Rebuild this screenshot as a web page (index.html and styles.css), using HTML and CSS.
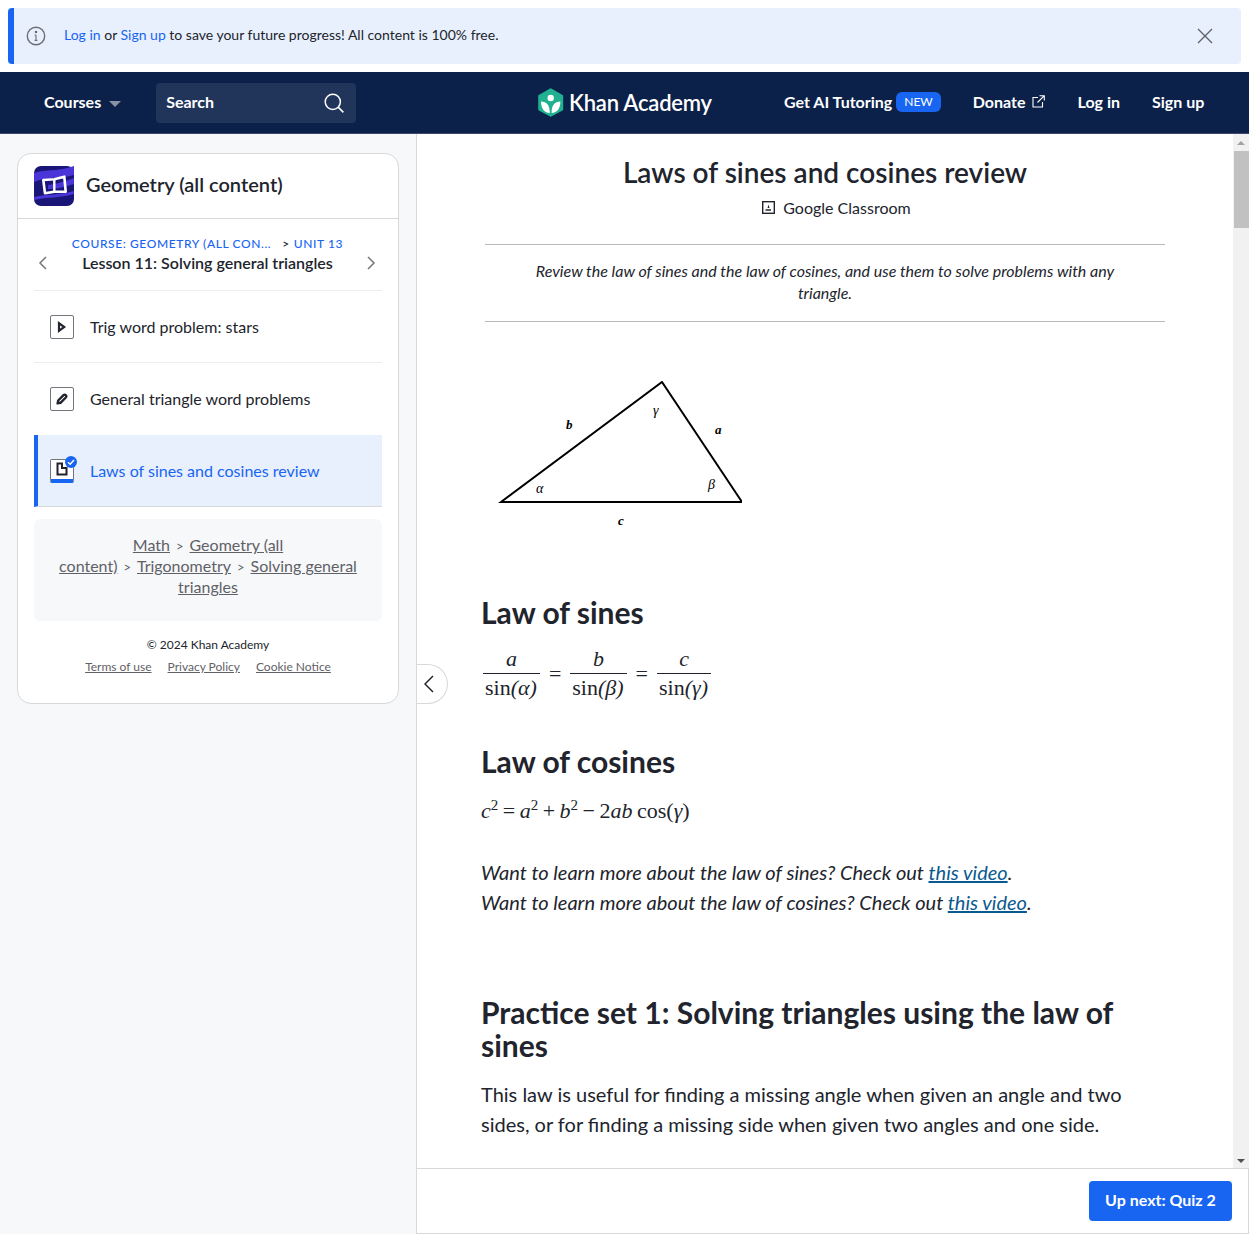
FILE: index.html
```html
<!DOCTYPE html>
<html lang="en">
<head>
	<meta charset="utf-8">
	<title>Laws of sines and cosines review</title>
	<link rel="stylesheet" href="styles.css">
</head>
<body>
	<div class="notice">
		<svg class="notice-icon" width="20" height="20" viewBox="0 0 20 20" fill="none" stroke="#6b6d72" stroke-width="1.4"><circle cx="10" cy="10" r="8.7"/><path d="M10 9v5.400M8.600 9H10M8.600 14.400h2.800" stroke-width="1.100"/><circle cx="10" cy="6" r=".6" fill="#6b6d72"/></svg>
		<p class="notice-text"><a href="#">Log in</a> or <a href="#">Sign up</a> to save your future progress! All content is 100% free.</p>
		<svg class="notice-close" width="16" height="16" viewBox="0 0 16 16" stroke="#5f6167" stroke-width="1.4"><path d="M1 1l14 14M15 1L1 15"/></svg>
	</div>

	<header class="nav">
		<div class="nav-left">
			<a class="nav-link" href="#">Courses</a>
			<span class="caret"></span>
			<div class="search">
				<span>Search</span>
				<svg width="22" height="22" viewBox="0 0 22 22" fill="none" stroke="#fff" stroke-width="1.5"><circle cx="9.800" cy="9.800" r="7.600"/><path d="M15.400 15.400l5 5"/></svg>
			</div>
		</div>
		<a class="logo" href="#">
			<svg width="27" height="29" viewBox="0 0 27 29"><path d="M13.700 1.500L25 8v13.500L13.700 27.500 2.400 21.500V8z" fill="#1fb190" stroke="#1fb190" stroke-width="2.400" stroke-linejoin="round"/><circle cx="13.700" cy="10" r="3.200" fill="#fff"/><path d="M4 13.500c5.500 0 8.800 3.500 8.800 11.500C7 25 4 20 4 13.500zM23.400 13.500c-5.500 0-8.800 3.500-8.800 11.500 5.800 0 8.800-5 8.800-11.500z" fill="#fff"/></svg>
			<span>Khan Academy</span>
		</a>
		<div class="nav-right">
			<a class="nav-link ai" href="#"><span>Get AI Tutoring</span> <span class="badge">NEW</span></a>
			<a class="nav-link donate" href="#"><span>Donate</span>
				<svg width="13" height="13" viewBox="0 0 13 13" fill="none" stroke="#fff" stroke-width="1.100"><path d="M6 2.500H1v9.500h9.500V7M7.500.700h4.800v4.800M12.300.700L5.500 7.500"/></svg>
			</a>
			<a class="nav-link" href="#">Log in</a>
			<a class="nav-link" href="#">Sign up</a>
		</div>
	</header>

	<div class="page">
		<aside class="sidebar">
			<div class="card">
				<div class="card-head">
					<svg class="course-icon" width="40" height="40" viewBox="0 0 40 40">
						<rect width="40" height="40" rx="7" fill="#1a1678"/>
						<path d="M0 7C12 3 24 6 40 0v9C26 13 14 10 0 16zM14 19c9-1 18-4 26-7v6c-9 3-18 5-26 5zM0 31c14-3 26-2 40-6v3c-14 4-26 3-40 6z" fill="#4a36d8"/>
						<path d="M9.300 14L20.300 13.300 30.300 10.700 31.700 25.700 20.300 25.700 11 27.300z" fill="none" stroke="#fff" stroke-width="2.600" stroke-linejoin="round"/>
						<path d="M20.300 13.300v12.400" stroke="#fff" stroke-width="2.400"/>
					</svg>
					<h2 class="course-title">Geometry (all content)</h2>
				</div>
				<div class="card-body">
					<div class="lesson-nav">
						<svg width="10" height="14" viewBox="0 0 10 14" fill="none" stroke="#75777c" stroke-width="1.500"><path d="M8 1L2 7l6 6"/></svg>
						<div class="lesson-info">
							<div class="crumbs"><span class="crumb-course">COURSE: GEOMETRY (ALL CON...</span><span class="crumb-sep">&gt;</span><span>UNIT 13</span></div>
							<div class="lesson-title">Lesson 11: Solving general triangles</div>
						</div>
						<svg width="10" height="14" viewBox="0 0 10 14" fill="none" stroke="#75777c" stroke-width="1.500"><path d="M2 1l6 6-6 6"/></svg>
					</div>
					<a class="item" href="#">
						<span class="item-icon"><svg width="10" height="12" viewBox="0 0 10 12" fill="none" stroke="#21242c" stroke-width="2.200"><path d="M2 2.200v7.600l5.200-3.800z"/></svg></span>
						Trig word problem: stars
					</a>
					<a class="item item-plain" href="#">
						<span class="item-icon"><svg width="12" height="12" viewBox="0 0 12 12" fill="none" stroke="#21242c" stroke-width="2.400" stroke-linejoin="round"><path d="M1.600 10.400L2.200 7.500 7.500 2.200a1.700 1.700 0 0 1 2.300 0a1.700 1.700 0 0 1 0 2.300L4.500 9.800z"/></svg></span>
						General triangle word problems
					</a>
					<a class="item item-active" href="#">
						<span class="item-icon item-icon-active">
							<svg width="12" height="14" viewBox="0 0 12 14" fill="none" stroke="#21242c" stroke-width="2"><path d="M1.500 1.500h4.500v4.500h4.500v6.500h-9z"/></svg>
							<svg class="check" width="12" height="12" viewBox="0 0 12 12"><circle cx="6" cy="6" r="6" fill="#1865f2"/><path d="M3 6.200l2.200 2L9 4" fill="none" stroke="#fff" stroke-width="1.500"/></svg>
						</span>
						Laws of sines and cosines review
					</a>
					<nav class="path">
						<a href="#">Math</a><span class="sep">&gt;</span><a href="#">Geometry (all content)</a><span class="sep">&gt;</span><a href="#">Trigonometry</a><span class="sep">&gt;</span><a href="#">Solving general triangles</a>
					</nav>
					<div class="legal">
						<div>© 2024 Khan Academy</div>
						<div class="legal-links"><a href="#">Terms of use</a><a href="#">Privacy Policy</a><a href="#">Cookie Notice</a></div>
					</div>
				</div>
			</div>
		</aside>

		<main class="content">
			<button class="collapse"><svg width="10" height="18" viewBox="0 0 10 18" fill="none" stroke="#21242c" stroke-width="1.500"><path d="M9 1L1 9l8 8"/></svg></button>
			<div class="scroller">
				<article class="article">
					<header class="article-head">
						<h1>Laws of sines and cosines review</h1>
						<div class="classroom">
							<svg width="13" height="13" viewBox="0 0 13 13" fill="none"><rect x=".7" y=".7" width="11.600" height="11.600" stroke="#21242c" stroke-width="1.400"/><path d="M6.500 3.500l1 3.500h-2z" fill="#21242c"/><path d="M3.500 9h5.500" stroke="#21242c" stroke-width="1.500"/></svg>
							Google Classroom
						</div>
					</header>
					<p class="summary">Review the law of sines and the law of cosines, and use them to solve problems with any triangle.</p>
					<div class="body">
						<svg class="triangle" width="260" height="160" viewBox="0 0 260 160">
							<path d="M19 121L180 1l80 120z" fill="none" stroke="#000" stroke-width="2"/>
							<g font-family="'Liberation Serif', serif" font-style="italic" font-size="13" font-weight="bold">
								<text x="84" y="48">b</text>
								<text x="233" y="53">a</text>
								<text x="136" y="144">c</text>
							</g>
							<g font-family="'Liberation Serif', serif" font-style="italic" font-size="14">
								<text x="54" y="112">α</text>
								<text x="171" y="34">γ</text>
								<text x="226" y="108">β</text>
							</g>
						</svg>

						<h2 class="sines">Law of sines</h2>
						<div class="math math-fracs">
							<span class="frac"><span class="num">a</span><span class="den"><b>sin</b>(α)</span></span>
							<span class="eq">=</span>
							<span class="frac"><span class="num">b</span><span class="den"><b>sin</b>(β)</span></span>
							<span class="eq">=</span>
							<span class="frac"><span class="num">c</span><span class="den"><b>sin</b>(γ)</span></span>
						</div>

						<h2 class="cosines">Law of cosines</h2>
						<div class="math math-line">c<sup>2</sup> <span class="eq">=</span> a<sup>2</sup> <span class="eq">+</span> b<sup>2</sup> <span class="eq">−</span> <span class="up">2</span>ab <span class="up">cos(</span>γ<span class="up">)</span></div>

						<p class="more">Want to learn more about the law of sines? Check out <a href="#">this video</a>.<br>Want to learn more about the law of cosines? Check out <a href="#">this video</a>.</p>

						<h2 class="practice">Practice set 1: Solving triangles using the law of sines</h2>
						<p class="para">This law is useful for finding a missing angle when given an angle and two sides, or for finding a missing side when given two angles and one side.</p>
					</div>
				</article>
				<div class="scrollbar">
					<span class="arrow arrow-up"></span>
					<span class="thumb"></span>
					<span class="arrow arrow-down"></span>
				</div>
			</div>
			<footer class="next-bar">
				<a class="next" href="#">Up next: Quiz 2</a>
			</footer>
		</main>
	</div>
</body>
</html>
```

FILE: styles.css
```css
* {
	box-sizing: border-box;
}

html, body {
	height: 100%;
}

body {
	margin: 0;
	height: 1234px;
	overflow: hidden;
	display: flex;
	flex-direction: column;
	font-family: 'Lato', sans-serif;
	color: #21242c;
	background: #fff;
}

a {
	color: inherit;
	text-decoration: none;
}

/* notice */
.notice {
	margin: 8px;
	height: 56px;
	display: flex;
	align-items: center;
	background: #e9f0fd;
	border-left: 6px solid #1865f2;
	border-radius: 4px;
	padding: 0 28px 0 12px;
}

.notice-text {
	margin: 0 0 4px 18px;
	flex: 1;
	font-size: 14px;
}

.notice-text a {
	color: #1865f2;
}

/* nav */
.nav {
	height: 62px;
	flex: none;
	display: flex;
	align-items: center;
	background: #0c2149;
	border-bottom: 1px solid #3b4a6b;
	color: #fff;
	position: relative;
}

.nav-link {
	font-size: 16px;
	font-weight: 700;
	color: #fff;
	padding-bottom: 2px;
}

.nav-left {
	display: flex;
	align-items: center;
	padding-left: 44px;
	width: 537px;
	flex: none;
}

.caret {
	width: 0;
	height: 0;
	margin: 2px 0 0 8px;
	border: 6px solid transparent;
	border-top: 6px solid #8a93a6;
	border-bottom: 0;
}

.search {
	margin-left: 35px;
	width: 200px;
	height: 40px;
	display: flex;
	align-items: center;
	justify-content: space-between;
	padding: 0 11px 0 10px;
	background: #21345a;
	border-radius: 4px;
	font-size: 16px;
	font-weight: 700;
}

.search span {
	padding-bottom: 2px;
}

.logo {
	display: flex;
	align-items: center;
	gap: 5px;
	width: 247px;
	flex: none;
	font-size: 22px;
	font-weight: 600;
	letter-spacing: -.2px;
}

.nav-right {
	display: flex;
	align-items: center;
	gap: 32px;
}

.ai {
	display: flex;
	align-items: center;
	gap: 4px;
}

.badge {
	background: #1865f2;
	border-radius: 6px;
	height: 20px;
	padding: 0 8px;
	font-size: 12px;
	font-weight: 400;
	line-height: 20px;
}

.donate {
	display: flex;
	align-items: center;
	gap: 6px;
	margin-right: 1px;
}

/* page */
.page {
	flex: 1;
	min-height: 0;
	display: flex;
}

.sidebar {
	width: 417px;
	flex: none;
	background: #f7f8fa;
	border-right: 1px solid #d6d8da;
	padding: 19px 17px;
}

.card {
	width: 382px;
	background: #fff;
	border: 1px solid #d6d8da;
	border-radius: 14px;
	height: 551px;
}

.card-head {
	height: 65px;
	display: flex;
	align-items: center;
	gap: 12px;
	padding-left: 16px;
	border-bottom: 1px solid #d6d8da;
}

.course-title {
	margin: 0 0 4px;
	font-size: 20px;
	font-weight: 600;
}

.card-body {
	padding: 0 16px;
}

.lesson-nav {
	height: 72px;
	display: flex;
	align-items: center;
	justify-content: space-between;
	padding: 0 6px 0 4px;
	border-bottom: 1px solid #eeeeef;
}

.lesson-nav > svg {
	margin-top: 16px;
}

.lesson-info {
	text-align: center;
	margin: 0 0 2px 1px;
}

.crumbs {
	font-size: 12px;
	font-weight: 500;
	letter-spacing: .6px;
	color: #1865f2;
	display: flex;
	justify-content: center;
	margin-bottom: 2px;
}

.crumb-sep {
	color: #21242c;
	margin: 0 4px 0 11px;
}

.lesson-title {
	font-size: 16px;
	font-weight: 600;
}

.item {
	height: 72px;
	display: flex;
	align-items: center;
	gap: 16px;
	padding-left: 16px;
	font-size: 16px;
	border-bottom: 1px solid #eeeeef;
}

.item-plain {
	border-bottom-color: transparent;
}

.item-icon {
	width: 24px;
	height: 24px;
	display: flex;
	align-items: center;
	justify-content: center;
	background: #fff;
	border: 1px solid #72757b;
	border-radius: 2px;
	position: relative;
}

.item-active {
	background: #e9f0fd;
	border-left: 4px solid #1865f2;
	border-bottom: 1px solid #d6d8da;
	padding-left: 12px;
	color: #1865f2;
}

.item-icon-active {
	border-bottom: 4px solid #1865f2;
}

.check {
	position: absolute;
	top: -4px;
	right: -4px;
}

.path {
	margin-top: 12px;
	height: 102px;
	padding: 15px 20px;
	background: #f7f8fa;
	border-radius: 6px;
	text-align: center;
	font-size: 16px;
	line-height: 21px;
	color: #5f6167;
}

.path a {
	text-decoration: underline;
}

.sep {
	margin: 0 6px;
	font-size: 13px;
	line-height: 1;
}

.legal {
	margin-top: 16px;
	text-align: center;
	font-size: 12px;
}

.legal-links {
	margin-top: 7px;
	display: flex;
	justify-content: center;
	gap: 16px;
	color: #5f6167;
}

.legal-links a {
	text-decoration: underline;
}

/* content */
.content {
	flex: 1;
	min-width: 0;
	display: flex;
	flex-direction: column;
	position: relative;
}

.collapse {
	position: absolute;
	left: 0;
	top: 530px;
	width: 31px;
	height: 40px;
	background: #fff;
	border: 1px solid #d6d8da;
	border-left: 0;
	border-radius: 0 20px 20px 0;
	display: flex;
	align-items: center;
	justify-content: flex-start;
	padding: 0 0 0 7px;
}

.scroller {
	flex: 1;
	min-height: 0;
	display: flex;
}

.article {
	flex: 1;
	min-width: 0;
	overflow: hidden;
}

.article-head {
	text-align: center;
	padding-top: 20px;
	height: 110px;
}

h1 {
	margin: 0;
	font-size: 28px;
	font-weight: 600;
	line-height: 36px;
}

.classroom {
	margin: 8px 0 0 23px;
	font-size: 16px;
	display: flex;
	align-items: center;
	justify-content: center;
	gap: 8px;
}

.summary {
	margin: 0 68px;
	height: 78px;
	padding: 15px 48px;
	border-top: 1px solid #b8b9bc;
	border-bottom: 1px solid #b8b9bc;
	text-align: center;
	font-size: 16px;
	font-style: italic;
	line-height: 22px;
}

.body {
	padding: 0 64px;
}

.triangle {
	display: block;
	margin: 59px 0 0 1px;
}

.body h2 {
	margin: 0;
	font-size: 30px;
	font-weight: 700;
	line-height: 33px;
}

.body .sines {
	margin-top: 55px;
}

.math {
	font-family: 'Liberation Serif', serif;
	font-style: italic;
	font-size: 22px;
}

.math b, .up {
	font-weight: 400;
	font-style: normal;
}

.math-fracs {
	margin: 17px 0 0 2px;
	display: flex;
	align-items: center;
	gap: 9px;
}

.frac {
	display: flex;
	flex-direction: column;
	align-items: center;
}

.num {
	line-height: 26px;
	height: 28px;
	align-self: stretch;
	text-align: center;
	border-bottom: 1px solid #21242c;
}

.den {
	padding: 0 3px 0 2px;
	line-height: 28px;
}

.eq {
	font-style: normal;
}

.body .cosines {
	margin-top: 43px;
}

.math-line {
	margin-top: 18px;
	line-height: 30px;
	word-spacing: -1px;
}

.math-line sup {
	font-size: 15px;
	font-style: normal;
	line-height: 0;
}

.more {
	margin: 31px 0 0;
	font-size: 20px;
	font-style: italic;
	line-height: 30px;
}

.more a {
	color: #0a5a8f;
	text-decoration: underline;
}

.body .practice {
	margin-top: 79px;
}

.para {
	margin: 17px 0 0;
	font-size: 20px;
	line-height: 30px;
}

/* fake scrollbar, the page is cut at the window */
.scrollbar {
	width: 16px;
	flex: none;
	display: flex;
	flex-direction: column;
	align-items: center;
	background: #f1f1f1;
}

.thumb {
	width: 15px;
	height: 77px;
	background: #c1c1c1;
	margin-top: 6px;
}

.arrow {
	width: 0;
	height: 0;
	border: 4px solid transparent;
}

.arrow-up {
	margin-top: 7px;
	border-top: 0;
	border-bottom: 4px solid #a3a3a3;
}

.arrow-down {
	margin-top: auto;
	margin-bottom: 5px;
	border-bottom: 0;
	border-top: 4px solid #505050;
}

.next-bar {
	height: 66px;
	flex: none;
	display: flex;
	align-items: center;
	justify-content: flex-end;
	padding: 0 16px 0 0;
	border-top: 1px solid #d6d8da;
	border-right: 1px solid #d6d8da;
	border-bottom: 1px solid #d6d8da;
}

.next {
	height: 40px;
	width: 143px;
	padding-bottom: 3px;
	display: flex;
	align-items: center;
	justify-content: center;
	background: #1865f2;
	border-radius: 4px;
	color: #fff;
	font-size: 16px;
	font-weight: 700;
}
```
